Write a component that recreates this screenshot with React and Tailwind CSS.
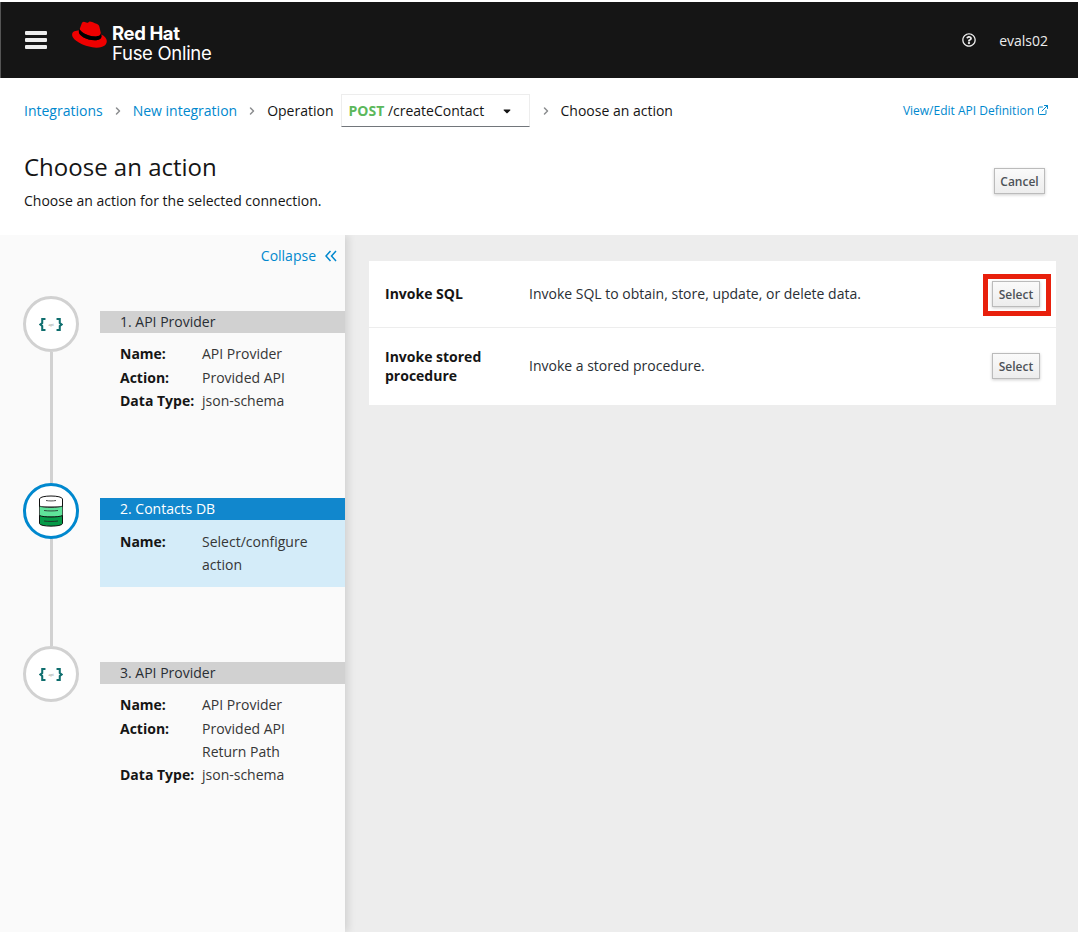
import { ChevronRight, ExternalLink } from 'lucide-react'
import { FaRegQuestionCircle, FaCaretDown } from 'react-icons/fa'

function ApiIcon() {
  return (
    <svg width="24" height="15" viewBox="0 0 26 16">
      <path d="M7 2H3.5V6.5L1.5 8L3.5 9.5V14H7" fill="none" stroke="#0f6e6e" strokeWidth="2.2" />
      <path d="M19 2H22.5V6.5L24.5 8L22.5 9.5V14H19" fill="none" stroke="#0f6e6e" strokeWidth="2.2" />
      <text x="13" y="9.5" textAnchor="middle" fontSize="4" fill="#777" fontFamily="Open Sans">api</text>
    </svg>
  )
}

function DbIcon() {
  return (
    <svg width="24" height="32" viewBox="0 0 24 32">
      <path d="M.5 4v8h23V4C23.5 0 .5 0 .5 4z" fill="#fff" stroke="#111" strokeWidth="1" />
      <path d="M.5 11v11h23V11c-4 2-19 2-23 0z" fill="#5fe39a" stroke="#111" strokeWidth="0.7" />
      <path d="M.5 20.500v8c0 3.500 23 3.500 23 0v-8c-4 2-19 2-23 0z" fill="#069a48" stroke="#111" strokeWidth="1" />
      <path d="M7 5.5c3 .6 7 .6 10 0M5 15.5c4 .6 10 .6 14 0M5 26c4 .6 10 .6 14 0" fill="none" stroke="#222" strokeWidth="0.8" />
    </svg>
  )
}

function Detail({ label, children, tight, className = '' }) {
  return (
    <div className={`flex ${tight ? 'leading-[23px]' : 'leading-[23.5px]'} ${className}`}>
      <div className="w-[82px] shrink-0 font-bold text-[#151515]">{label}</div>
      <div className="text-[#363636]">{children}</div>
    </div>
  )
}

function Step({ height, active, last, title, icon, children }) {
  return (
    <div className="flex" style={{ height }}>
      <div className="w-[56px] flex flex-col items-center shrink-0 ml-[23px]">
        <div className={`w-[56px] h-[56px] shrink-0 rounded-full bg-white border-[3px] flex items-center justify-center ${active ? 'border-[#0088ce]' : 'border-[#d1d1d1]'}`}>
          {icon}
        </div>
        {!last && <div className="w-[3px] flex-1 bg-[#d1d1d1]"></div>}
      </div>
      <div className={`flex-1 ml-[21px] ${last ? 'pt-[16px]' : 'pt-[15px]'}`}>
        <div className={`h-[22px] pl-[20px] leading-[22px] ${active ? 'bg-[#1187cd] text-white font-medium' : 'bg-[#d1d1d1] text-[#292e34]'}`}>{title}</div>
        <div className={`pl-[20px] ${active ? 'pt-[10px] bg-[#d4ecf9] h-[67px]' : 'pt-[9px]'}`}>{children}</div>
      </div>
    </div>
  )
}

function Row({ title, desc, border, height, children }) {
  return (
    <div className={`flex items-center pl-[16px] pr-[16px] ${border ? 'border-b border-[#ededed]' : ''}`} style={{ height }}>
      <div className="w-[144px] shrink-0 -mt-[2px] font-bold text-[#151515] leading-[19px] pr-[20px]">{title}</div>
      <div className="flex-1 -mt-[2px] text-[#292e34]">{desc}</div>
      {children}
    </div>
  )
}

function Btn({ children, className }) {
  return (
    <button className={`h-[26px] pt-[1px] border border-[#bbbbbb] bg-gradient-to-b from-[#fafafa] to-[#ededed] text-[12px] font-semibold text-[#4d5258] shadow-[0_1px_3px_rgba(0,0,0,0.2)] ${className}`}>{children}</button>
  )
}

export default function App() {
  return (
    <div className="w-[1078px] h-[932px] overflow-hidden bg-white text-[14px] font-['Open_Sans',sans-serif] flex flex-col">
      {/* masthead */}
      <header className="h-[76px] shrink-0 mt-[2px] bg-[#151515] border-l border-[#555] flex items-center text-white">
        <div className="ml-[24px] w-[22px] flex flex-col gap-[3px]">
          <div className="h-[4px] rounded-[1px] bg-[#ededed]"></div>
          <div className="h-[4px] rounded-[1px] bg-[#ededed]"></div>
          <div className="h-[4px] rounded-[1px] bg-[#ededed]"></div>
        </div>
        <svg className="ml-[25px] -mt-[12px]" width="35" height="27" viewBox="0 0 192 145">
          <path fill="#e00" d="M127.47 83.49c12.51 0 30.61-2.58 30.61-17.46a14 14 0 0 0-.31-3.42l-7.45-32.36c-1.72-7.12-3.23-10.35-15.73-16.6C124.89 8.69 103.76.5 97.51.5 91.69.5 90 8 83.06 8c-6.68 0-11.64-5.6-17.89-5.6-6 0-9.91 4.09-12.93 12.5 0 0-8.41 23.72-9.49 27.16a6.43 6.43 0 0 0-.22 1.94c0 9.22 36.3 39.45 84.94 39.45M160 72.07c1.73 8.19 1.73 9.05 1.73 10.13 0 14-15.74 21.77-36.43 21.77C78.54 104 37.58 76.6 37.58 58.49a18.45 18.45 0 0 1 1.51-7.33C22.27 52 .5 55 .5 74.22c0 31.48 74.59 70.28 133.65 70.28 45.28 0 56.7-20.48 56.7-36.65 0-12.72-11-27.16-30.83-35.78" />
          <path fill="#000" d="M160 72.07c1.73 8.19 1.73 9.05 1.73 10.13 0 14-15.74 21.77-36.43 21.77C78.54 104 37.58 76.6 37.58 58.49a18.45 18.45 0 0 1 1.51-7.33l3.66-9.06a6.43 6.43 0 0 0-.22 1.94c0 9.22 36.3 39.45 84.94 39.45 12.51 0 30.61-2.58 30.61-17.46a14 14 0 0 0-.31-3.42z" />
        </svg>
        <div className="ml-[5px] mt-[5px] font-['Inter',sans-serif] leading-[20px]">
          <div className="text-[18.5px] font-bold tracking-[-0.4px]">Red Hat</div>
          <div className="text-[18.5px] font-normal tracking-[-0.3px]">Fuse Online</div>
        </div>
        <div className="ml-auto flex items-center mr-[30px] text-[#ededed]">
          <FaRegQuestionCircle size={14} />
          <span className="ml-[23px]">evals02</span>
        </div>
      </header>

      {/* breadcrumb */}
      <div className="h-[66px] shrink-0 flex items-center pl-[24px] pr-[29px] pb-[1px] text-[#151515]">
        <span className="text-[#0088ce]">Integrations</span>
        <ChevronRight size={12} strokeWidth={3} className="mx-[9px] text-[#8b8d8f]" />
        <span className="text-[#0088ce]">New integration</span>
        <ChevronRight size={12} strokeWidth={3} className="mx-[9px] text-[#8b8d8f]" />
        <span>Operation</span>
        <div className="ml-[7px] w-[189px] h-[33px] border border-[#ededed] border-b-[#72767b] flex items-center pl-[7px] pr-[16px] justify-between">
          <span><b className="font-bold text-[#5cb85c]">POST</b> /createContact</span>
          <FaCaretDown size={12} className="text-[#151515]" />
        </div>
        <ChevronRight size={12} strokeWidth={3} className="ml-[10px] mr-[9px] text-[#8b8d8f]" />
        <span>Choose an action</span>
        <div className="ml-auto flex items-center text-[12px] text-[#0088ce]">
          View/Edit API Definition
          <ExternalLink size={12} className="ml-[3px] -mt-[2px]" />
        </div>
      </div>

      {/* title */}
      <div className="h-[91px] shrink-0 flex pl-[24px] pr-[33px] bg-white">
        <div>
          <h1 className="text-[24px] leading-[32px] text-[#151515] mt-[7px]">Choose an action</h1>
          <p className="mt-[8px] text-[#151515] leading-[20px]">Choose an action for the selected connection.</p>
        </div>
        <Btn className="ml-auto w-[51px] mt-[24px]">Cancel</Btn>
      </div>

      <div className="flex-1 flex bg-[#ededed] overflow-hidden">
        {/* sidebar */}
        <aside className="w-[345px] shrink-0 bg-[#fafafa] shadow-[3px_0_8px_rgba(0,0,0,0.12)] text-[14px]">
          <div className="h-[61px] flex justify-end items-start pt-[10px] pr-[8px] text-[#0088ce] leading-[22px]">
            Collapse
            <svg className="ml-[9px] mt-[5px]" width="12" height="12" viewBox="0 0 12 12" fill="none" stroke="currentColor" strokeWidth="1.5">
              <path d="M5.5 1L1 6l4.5 5M11 1L6.5 6l4.5 5" />
            </svg>
          </div>
          <Step height={187} title="1. API Provider" icon={<ApiIcon />}>
            <Detail label="Name:">API Provider</Detail>
            <Detail label="Action:">Provided API</Detail>
            <Detail label="Data Type:">json-schema</Detail>
          </Step>
          <Step height={163} active title="2. Contacts DB" icon={<DbIcon />}>
            <Detail tight label="Name:">Select/configure<br />action</Detail>
          </Step>
          <Step last height={200} title="3. API Provider" icon={<ApiIcon />}>
            <Detail label="Name:">API Provider</Detail>
            <Detail label="Action:">Provided API<br />Return Path</Detail>
            <Detail label="Data Type:" className="-mt-[1px]">json-schema</Detail>
          </Step>
        </aside>

        {/* actions */}
        <main className="flex-1 pt-[26px] pl-[24px] pr-[22px]">
          <div className="bg-white relative">
            <Row border height={67} title="Invoke SQL" desc="Invoke SQL to obtain, store, update, or delete data.">
              <Btn className="w-[48px]">Select</Btn>
            </Row>
            <Row height={77} title="Invoke stored procedure" desc="Invoke a stored procedure.">
              <Btn className="w-[48px] -mt-[1px]">Select</Btn>
            </Row>
            <div className="absolute left-[614px] top-[13px] w-[68px] h-[42px] border-[5px] border-[#e8200c]"></div>
          </div>
        </main>
      </div>
    </div>
  )
}
